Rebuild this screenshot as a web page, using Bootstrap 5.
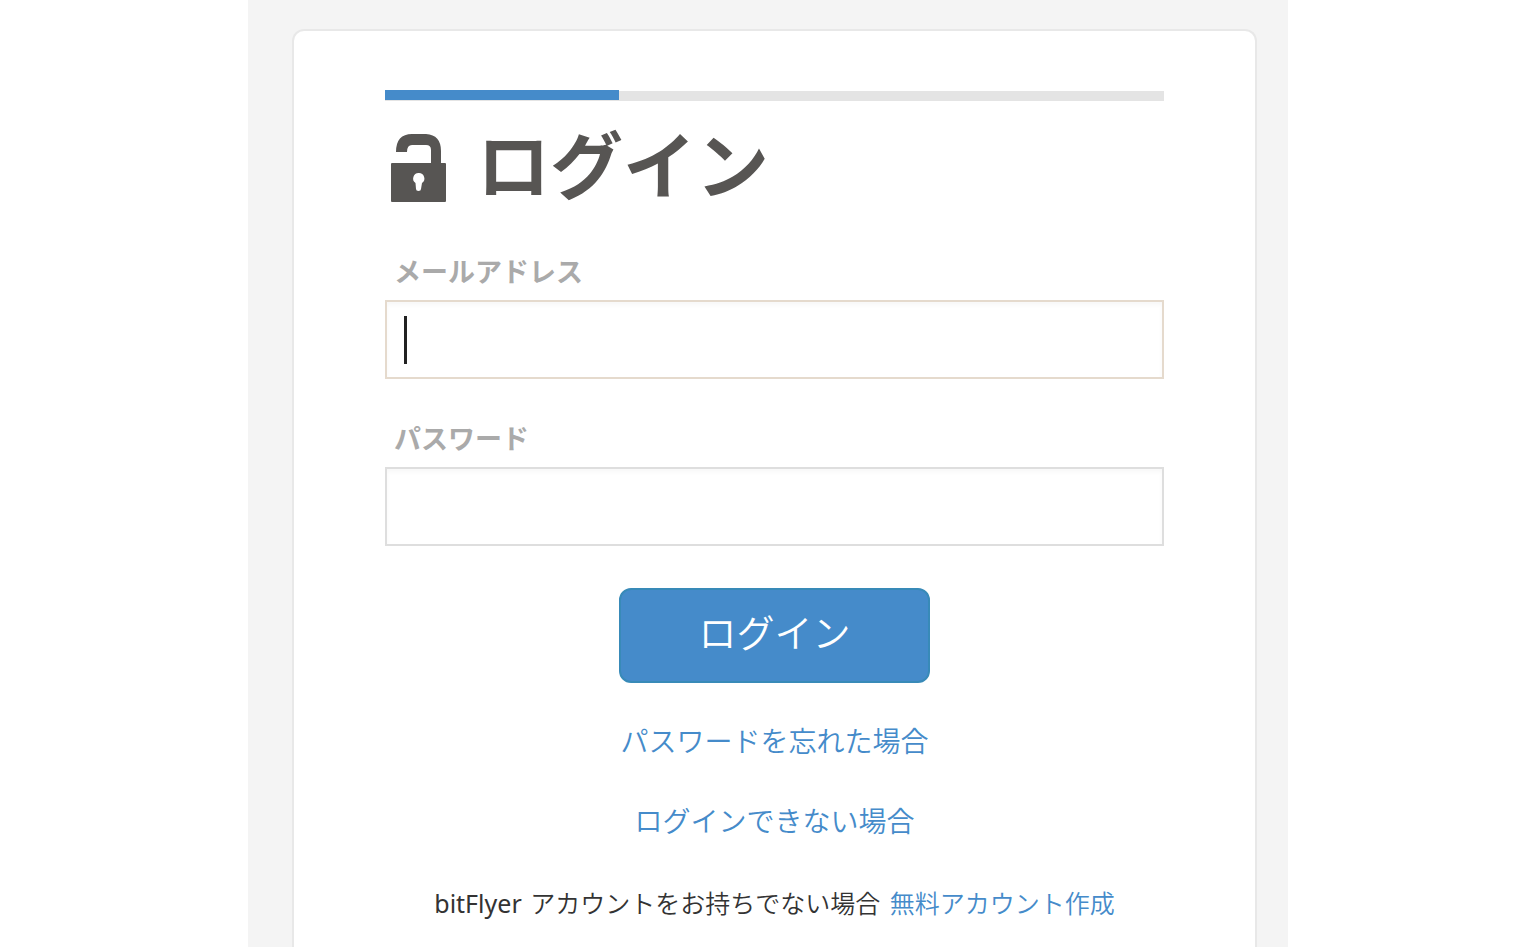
<!DOCTYPE html>
<html lang="ja">
<head>
<meta charset="utf-8">
<meta name="viewport" content="width=device-width, initial-scale=1">
<title>ログイン</title>
<link href="https://cdn.jsdelivr.net/npm/bootstrap@5.3.0/dist/css/bootstrap.min.css" rel="stylesheet">
<style>
  body { font-family: "Noto Sans", "Noto Sans CJK JP", sans-serif; font-weight: 350; color: #333; background: #fff; }
  .page-wrap { max-width: 1040px; background: #f4f4f4; padding: 29px 31px 0 44px; }
  .login-card { border: 2px solid #e8e8e8; border-bottom: 0; border-radius: 12px 12px 0 0; padding: 59px 91px 24px; }
  .step-bar { height: 11px; border-radius: 0; background: linear-gradient(#fff 1px, #e4e4e4 1px); }
  .step-bar .progress-bar { height: 10px; background: #458bca; }
  .login-title { font-size: 73px; line-height: 100px; color: #575553; padding-left: 6px; margin: 14px 0 31px; gap: 30px; }
  .login-title span { padding-bottom: 6px; }
  .field-label { font-size: 27px; line-height: 40px; color: #aaa; margin: 0 0 8px 9px; }
  .field-input { height: 79px; font-size: 28px; border: 2px solid #dedede; border-radius: 0; padding: 8px 18px; box-shadow: inset 0 3px 4px rgba(0,0,0,.03); }
  .field-input.active-field { border-color: #e5dacd; }
  .text-caret { left: 19px; width: 3px; height: 48px; background: #222; }
  .login-action { padding-top: 18px; }
  .btn-login { width: 40%; height: 95px; font-size: 38px; font-weight: 350; line-height: 50px; padding: 0 0 8px; color: #fff; background: #458bca; border: 2px solid #388ab8; border-radius: 12px; }
  .btn-login:hover { color: #fff; background: #3a7cb8; }
  .login-link { color: #458bca; text-decoration: none; }
  .help-links { font-size: 28px; line-height: 42px; gap: 38px; margin-top: 37px; }
  .signup-line { font-size: 25px; line-height: 42px; margin-top: 40px; }
  .signup-line .brand-name { font-weight: 400; margin-right: 2px; }
  .signup-line .login-link { margin-left: 3px; }
</style>
</head>
<body>
<div class="page-wrap mx-auto min-vh-100 d-flex flex-column">
  <main class="login-card bg-white flex-grow-1">
    <div class="progress step-bar" role="progressbar" aria-label="進捗" aria-valuenow="30" aria-valuemin="0" aria-valuemax="100">
      <div class="progress-bar" style="width:30%"></div>
    </div>
    <h1 class="login-title fw-bold d-flex align-items-center">
      <svg width="56" height="68" viewBox="0 0 56 68" fill="#575553" aria-hidden="true">
        <path fill-rule="evenodd" d="M1 29H40V16Q40 11 35 11H21Q16 11 16 18H5Q5 0 21 0H35Q50 1 50 17V29H54Q55 29 55 30V67Q55 68 54 68H1Q0 68 0 67V30Q0 29 1 29ZM27.500 39A5.500 5.500 0 0 0 24.500 49L25 55Q25 57 27.500 57Q30 57 30 55L31 49A5.500 5.500 0 0 0 27.500 39Z"/>
      </svg>
      <span>ログイン</span>
    </h1>
    <form>
      <div class="mb-4">
        <label class="field-label fw-bold d-block" for="email">メールアドレス</label>
        <div class="position-relative d-flex align-items-center">
          <input class="form-control field-input active-field" type="email" id="email">
          <span class="text-caret position-absolute" aria-hidden="true"></span>
        </div>
      </div>
      <div class="mb-4 pt-3">
        <label class="field-label fw-bold d-block" for="password">パスワード</label>
        <input class="form-control field-input" type="password" id="password">
      </div>
      <div class="login-action text-center">
        <button class="btn btn-login" type="submit">ログイン</button>
      </div>
    </form>
    <div class="help-links d-flex flex-column align-items-center">
      <a class="login-link" href="#">パスワードを忘れた場合</a>
      <a class="login-link" href="#">ログインできない場合</a>
    </div>
    <p class="signup-line text-center mb-0"><span class="brand-name">bitFlyer</span> アカウントをお持ちでない場合 <a class="login-link" href="#">無料アカウント作成</a></p>
  </main>
</div>
<script src="https://cdn.jsdelivr.net/npm/bootstrap@5.3.0/dist/js/bootstrap.bundle.min.js"></script>
</body>
</html>
